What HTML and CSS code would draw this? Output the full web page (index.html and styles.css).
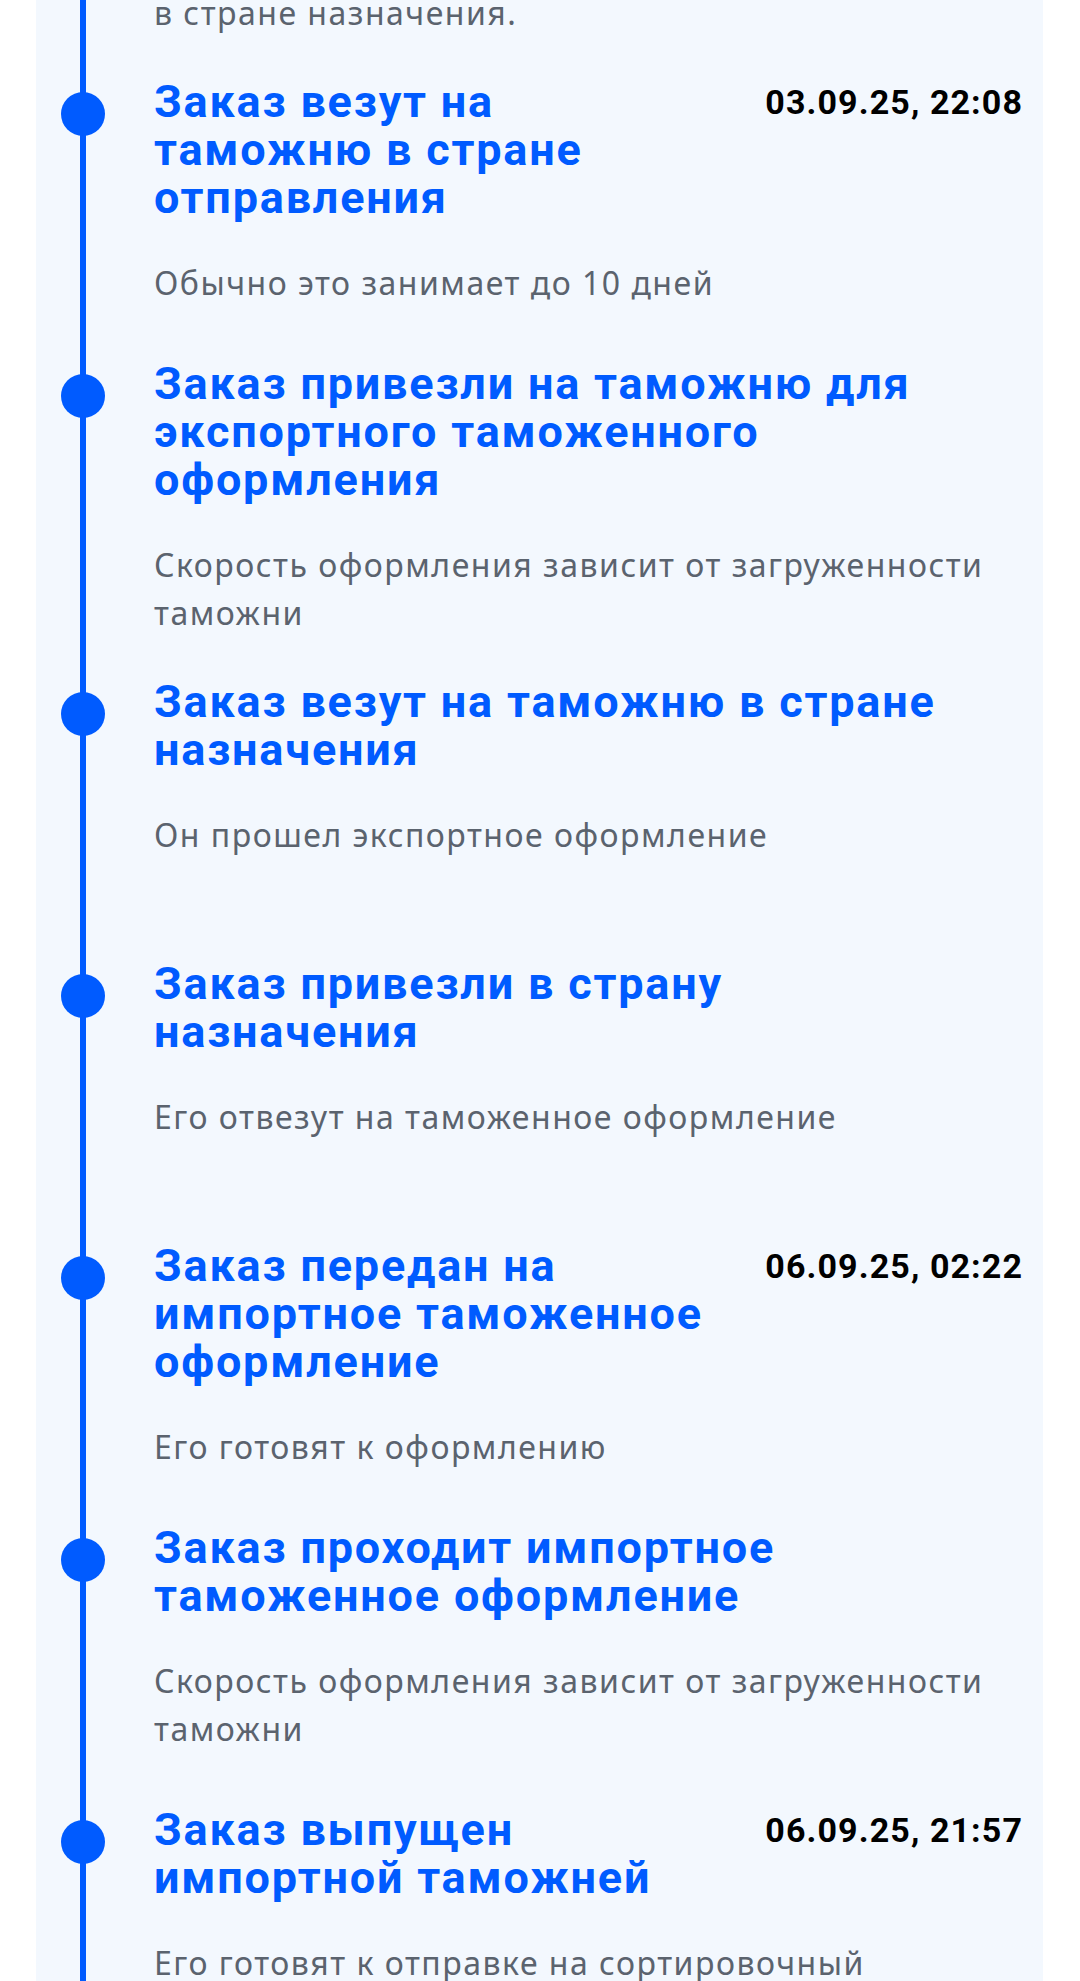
FILE: index.html
```html
<!DOCTYPE html>
<html lang="ru">
<head>
    <meta charset="UTF-8">
    <meta name="viewport" content="width=device-width, initial-scale=1.0">
    <title>Отслеживание заказа</title>
    <link rel="stylesheet" href="styles.css">
</head>
<body>
    <div class="timeline">
        <!-- tail of the previous step, scrolled off the top -->
        <div class="step step-tail">
            <div class="marker"></div>
            <div class="body">
                <p class="desc">в стране назначения.</p>
            </div>
        </div>

        <div class="step">
            <div class="marker"><span class="dot"></span></div>
            <div class="body">
                <div class="head">
                    <h3 class="title">Заказ везут на<br>таможню в стране<br>отправления</h3>
                    <span class="date">03.09.25, 22:08</span>
                </div>
                <p class="desc">Обычно это занимает до 10 дней</p>
            </div>
        </div>

        <div class="step">
            <div class="marker"><span class="dot"></span></div>
            <div class="body">
                <div class="head">
                    <h3 class="title">Заказ привезли на таможню для<br>экспортного таможенного<br>оформления</h3>
                </div>
                <p class="desc">Скорость оформления зависит от загруженности<br>таможни</p>
            </div>
        </div>

        <div class="step">
            <div class="marker"><span class="dot"></span></div>
            <div class="body">
                <div class="head">
                    <h3 class="title">Заказ везут на таможню в стране<br>назначения</h3>
                </div>
                <p class="desc">Он прошел экспортное оформление</p>
            </div>
        </div>

        <div class="step">
            <div class="marker"><span class="dot"></span></div>
            <div class="body">
                <div class="head">
                    <h3 class="title">Заказ привезли в страну<br>назначения</h3>
                </div>
                <p class="desc">Его отвезут на таможенное оформление</p>
            </div>
        </div>

        <div class="step">
            <div class="marker"><span class="dot"></span></div>
            <div class="body">
                <div class="head">
                    <h3 class="title">Заказ передан на<br>импортное таможенное<br>оформление</h3>
                    <span class="date">06.09.25, 02:22</span>
                </div>
                <p class="desc">Его готовят к оформлению</p>
            </div>
        </div>

        <div class="step">
            <div class="marker"><span class="dot"></span></div>
            <div class="body">
                <div class="head">
                    <h3 class="title">Заказ проходит импортное<br>таможенное оформление</h3>
                </div>
                <p class="desc">Скорость оформления зависит от загруженности<br>таможни</p>
            </div>
        </div>

        <div class="step">
            <div class="marker"><span class="dot"></span></div>
            <div class="body">
                <div class="head">
                    <h3 class="title">Заказ выпущен<br>импортной таможней</h3>
                    <span class="date">06.09.25, 21:57</span>
                </div>
                <p class="desc">Его готовят к отправке на сортировочный<br>центр</p>
            </div>
        </div>
    </div>
</body>
</html>
```

FILE: styles.css
```css
body {
    margin: 0;
    background-color: #ffffff;
    font-family: "Noto Sans", Arial, sans-serif;
}
.timeline {
    margin: -11px 37px 0 36px;
    padding-right: 20px;
    background: linear-gradient(#005bff, #005bff) no-repeat 44px 0 / 6px 100%, #f3f8fe;
}
.step {
    display: flex;
    min-height: 282px;
    box-sizing: border-box;
    padding-bottom: 41px;
}
.step-tail {
    min-height: 0;
}
.marker {
    flex: none;
    width: 94px;
    margin-right: 24px;
}
.dot {
    display: block;
    width: 44px;
    height: 44px;
    margin: 14px 0 0 25px;
    border-radius: 50%;
    background-color: #005bff;
}
.body {
    flex: 1;
    min-width: 0;
}
.head {
    display: flex;
    justify-content: space-between;
    align-items: flex-start;
    gap: 20px;
}
.title {
    margin: 0;
    font-family: Roboto, "Noto Sans", sans-serif;
    font-size: 45px;
    font-weight: 700;
    line-height: 48px;
    letter-spacing: 1.8px;
    color: #005bff;
}
.date {
    flex: none;
    font-family: Roboto, sans-serif;
    font-size: 34px;
    font-weight: 700;
    line-height: 48px;
    letter-spacing: 1.1px;
    color: #000000;
}
.desc {
    margin: 37px 0 0;
    font-size: 32px;
    line-height: 48px;
    letter-spacing: 1.5px;
    color: #5b636e;
}
.step-tail .desc {
    margin-top: 0;
}
```
